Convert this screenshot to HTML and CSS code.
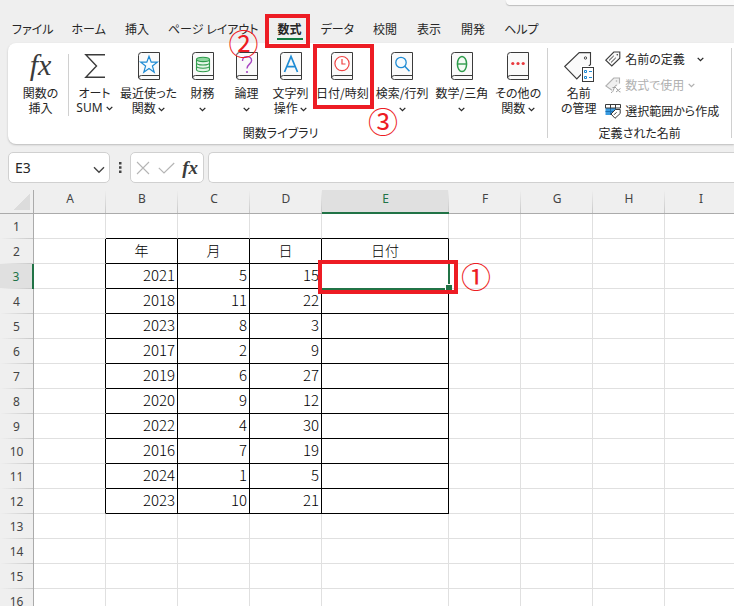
FILE: index.html
```html
<!DOCTYPE html>
<html lang="ja">
<head>
    <meta charset="UTF-8">
    <meta name="viewport" content="width=device-width, initial-scale=1.0">
    <title>Excel</title>
    <link rel="stylesheet" href="styles.css">
</head>
<body>

    <!-- shared icon shapes -->
    <svg class="defs" aria-hidden="true">
        <symbol id="book" viewBox="0 0 22 28">
            <path d="M21.5 .5H3.5Q.5 .5 .5 3.5V25Q.5 27.5 3.5 27.5H21.5Z" fill="#fafafa" stroke="#3b3b3b"/>
            <path d="M21.5 23.5H3.5Q.5 23.5 .5 26" fill="none" stroke="#3b3b3b"/>
        </symbol>
        <symbol id="caret" viewBox="0 0 7 5">
            <path d="M.7 .9L3.5 3.7L6.3 .9" fill="none" stroke="currentColor" stroke-width="1.3"/>
        </symbol>
    </svg>

    <header class="titlebar">
        <div class="search"></div>
    </header>

    <nav class="tabs">
        <button class="tab">ファイル</button>
        <button class="tab">ホーム</button>
        <button class="tab">挿入</button>
        <button class="tab">ページ レイアウト</button>
        <button class="tab active">数式<span class="mark mark-tab"></span><span class="num num-tab">②</span></button>
        <button class="tab">データ</button>
        <button class="tab">校閲</button>
        <button class="tab">表示</button>
        <button class="tab">開発</button>
        <button class="tab">ヘルプ</button>
    </nav>

    <section class="ribbon">
        <div class="group library">
            <div class="tools">
                <button class="tool insert-fn">
                    <span class="fx-big">fx</span>
                    <span>関数の</span>
                    <span>挿入</span>
                </button>
                <span class="divider"></span>
                <button class="tool">
                    <svg class="icon" viewBox="0 0 22 28"><path d="M21 2.7H1.8L12.5 14L1.8 25.3H21" fill="none" stroke="#3b3b3b" stroke-width="1.4"/></svg>
                    <span>オート</span>
                    <span class="latin">SUM <svg class="caret"><use href="#caret"/></svg></span>
                </button>
                <button class="tool">
                    <svg class="icon" viewBox="0 0 22 28"><use href="#book"/><path d="M11 4.2L13.2 10.2H19.3L14.4 14L16.2 20.2L11 16.5L5.8 20.2L7.6 14L2.7 10.2H8.8Z" fill="#f5fbff" stroke="#1e8bd4" stroke-width="1.2"/></svg>
                    <span>最近使った</span>
                    <span>関数 <svg class="caret"><use href="#caret"/></svg></span>
                </button>
                <button class="tool">
                    <svg class="icon" viewBox="0 0 22 28"><use href="#book"/><g fill="#e3f5e6" stroke="#2e9b4b" stroke-width="1.1"><path d="M4.5 7.5V17.5C4.5 20.4 17.5 20.4 17.5 17.5V7.5"/><path d="M4.5 14C4.5 17 17.5 17 17.5 14M4.5 10.8C4.5 13.8 17.5 13.8 17.5 10.8"/><ellipse cx="11" cy="7.4" rx="6.5" ry="2.2" fill="#8fd6a0"/></g></svg>
                    <span>財務</span>
                    <span><svg class="caret"><use href="#caret"/></svg></span>
                </button>
                <button class="tool">
                    <svg class="icon" viewBox="0 0 22 28"><use href="#book"/><path d="M6.5 9C6.5 3.2 15.6 3.2 15.6 8.6C15.6 12 11 12.4 11 16.5" fill="none" stroke="#a846c2" stroke-width="1.4"/><circle cx="11" cy="20" r="1.1" fill="#a846c2"/></svg>
                    <span>論理</span>
                    <span><svg class="caret"><use href="#caret"/></svg></span>
                </button>
                <button class="tool">
                    <svg class="icon" viewBox="0 0 22 28"><use href="#book"/><path d="M4.5 20L11 4.5L17.5 20M6.6 14.6H15.4" fill="none" stroke="#1e8bd4" stroke-width="1.7"/></svg>
                    <span>文字列</span>
                    <span>操作 <svg class="caret"><use href="#caret"/></svg></span>
                </button>
                <button class="tool">
                    <svg class="icon" viewBox="0 0 22 28"><use href="#book"/><circle cx="11" cy="11.6" r="7.1" fill="#fff" stroke="#f04343" stroke-width="1.2"/><path d="M11 7V12H14.5" fill="none" stroke="#f04343" stroke-width="1.2"/></svg>
                    <span>日付/時刻</span>
                    <span class="mark mark-tool"></span><span class="num num-tool">③</span>
                </button>
                <button class="tool">
                    <svg class="icon" viewBox="0 0 22 28"><use href="#book"/><circle cx="10" cy="10.5" r="5.2" fill="#f5fbff" stroke="#1e8bd4" stroke-width="1.3"/><path d="M13.8 14.3L18.5 19.3" stroke="#1e8bd4" stroke-width="1.5"/></svg>
                    <span>検索/行列</span>
                    <span><svg class="caret"><use href="#caret"/></svg></span>
                </button>
                <button class="tool">
                    <svg class="icon" viewBox="0 0 22 28"><use href="#book"/><ellipse cx="11" cy="12" rx="4.6" ry="7.5" fill="#f3fbf4" stroke="#2e9b4b" stroke-width="1.5"/><path d="M6.5 12H15.5" stroke="#2e9b4b" stroke-width="1.4"/></svg>
                    <span>数学/三角</span>
                    <span><svg class="caret"><use href="#caret"/></svg></span>
                </button>
                <button class="tool">
                    <svg class="icon" viewBox="0 0 22 28"><use href="#book"/><g fill="#e8383d"><circle cx="5.8" cy="11.5" r="1.6"/><circle cx="11" cy="11.5" r="1.6"/><circle cx="16.2" cy="11.5" r="1.6"/></g></svg>
                    <span>その他の</span>
                    <span>関数 <svg class="caret"><use href="#caret"/></svg></span>
                </button>
            </div>
            <p class="group-name">関数ライブラリ</p>
        </div>

        <div class="group names">
            <div class="tools">
                <button class="tool">
                    <svg class="icon-wide" viewBox="0 0 30 30"><path d="M.7 14.5L15.2 .6H26.5V12.5L12.8 27Z" fill="#fafafa" stroke="#3b3b3b" stroke-width="1.1"/><circle cx="21.5" cy="6" r="1.2" fill="none" stroke="#3b3b3b" stroke-width=".9"/><rect x="17" y="14" width="13" height="16" fill="#fff"/><rect x="18.5" y="15.5" width="11" height="14" fill="#fff" stroke="#3b3b3b"/><g fill="none" stroke="#1e8bd4"><path d="M20.5 18.5h2v2h-2zM20.5 24.5h2v2h-2zM25 19.5h3M25 25.5h3"/></g></svg>
                    <span>名前</span>
                    <span>の管理</span>
                </button>
                <div class="stack">
                    <button class="item">
                        <svg class="icon-small" viewBox="0 0 16 16"><path d="M.8 9.2L8.8 1H14.8V7.2L6.8 15Z" fill="#fafafa" stroke="#3b3b3b" stroke-width="1.1"/><path d="M4 9.5L8.8 4.8M6 11.5L10.8 6.8" stroke="#3b3b3b"/><circle cx="12.3" cy="3.8" r=".8" fill="#3b3b3b"/></svg>
                        <span>名前の定義</span>
                        <svg class="caret far"><use href="#caret"/></svg>
                    </button>
                    <button class="item" disabled>
                        <svg class="icon-small" viewBox="0 0 16 16"><path d="M7 13.2L.8 9L8.8 1H14.5V6.5" fill="#f0f0f0" stroke="#b0b0b0" stroke-width="1.1"/><circle cx="11.5" cy="4" r=".8" fill="#b0b0b0"/><path d="M6 15.5C9 16 8.8 7.5 11.8 8.2M7.5 10.5H11M11 11.5C13 11.5 13 15 15.5 15M15.5 11.5L11 15" fill="none" stroke="#a0a0a0"/></svg>
                        <span>数式で使用</span>
                        <svg class="caret"><use href="#caret"/></svg>
                    </button>
                    <button class="item">
                        <svg class="icon-small" viewBox="0 0 16 16"><path d="M.5 1.5H15.5V11.5H.5Z" fill="#fff"/><path d="M.5 5H11V12H.5Z" fill="#3a9be0"/><path d="M5.5 5V12M10.5 5V7M.5 8.5H9" stroke="#1c6fb0"/><path d="M.5 5V1.5H15.5V5ZM5.5 1.5V5M10.5 1.5V5" fill="none" stroke="#3b3b3b"/><path d="M6 11L10.5 6.5H15.2V10.5L10 15.3Z" fill="#fff" stroke="#3b3b3b"/><path d="M9 11.8L11.5 9.3" stroke="#3b3b3b"/></svg>
                        <span>選択範囲から作成</span>
                    </button>
                </div>
            </div>
            <p class="group-name">定義された名前</p>
        </div>
    </section>

    <div class="formula-bar">
        <div class="name-box">
            <input type="text" value="E3" aria-label="名前ボックス">
            <button class="name-open" aria-label="名前の一覧"><svg viewBox="0 0 12 8"><path d="M1 1.2L6 6.2L11 1.2" fill="none" stroke="#444" stroke-width="1.4"/></svg></button>
        </div>
        <svg class="dots" viewBox="0 0 3 11"><path d="M0 0h2.5v2.5h-2.5zM0 4.2h2.5v2.5h-2.5zM0 8.4h2.5v2.5h-2.5z" fill="#444"/></svg>
        <div class="entry">
            <button aria-label="キャンセル"><svg width="14" height="14" viewBox="0 0 14 14"><path d="M1 1L13 13M13 1L1 13" stroke="#b5b5b5" stroke-width="1.1"/></svg></button>
            <button aria-label="入力"><svg width="17" height="12" viewBox="0 0 17 12"><path d="M.8 5.8L6 11L16.2 1" fill="none" stroke="#b5b5b5" stroke-width="1.2"/></svg></button>
            <button class="fx-small">fx</button>
        </div>
        <input class="formula" type="text" aria-label="数式バー">
    </div>

    <main class="sheet">
        <table>
            <colgroup>
                <col class="c-head"><col><col><col><col><col class="c-wide"><col><col><col><col>
            </colgroup>
            <thead>
                <tr><th class="corner"></th><th>A</th><th>B</th><th>C</th><th>D</th><th class="selected">E</th><th>F</th><th>G</th><th>H</th><th>I</th></tr>
            </thead>
            <tbody>
                <tr class="before"><th>1</th><td></td><td></td><td></td><td></td><td></td><td></td><td></td><td></td><td></td></tr>
                <tr class="data title"><th>2</th><td></td><td>年</td><td>月</td><td>日</td><td>日付</td><td></td><td></td><td></td><td></td></tr>
                <tr class="data"><th class="selected">3</th><td></td><td>2021</td><td>5</td><td>15</td><td class="current"><span class="mark mark-cell"></span><span class="num num-cell">①</span></td><td></td><td></td><td></td><td></td></tr>
                <tr class="data"><th>4</th><td></td><td>2018</td><td>11</td><td>22</td><td></td><td></td><td></td><td></td><td></td></tr>
                <tr class="data"><th>5</th><td></td><td>2023</td><td>8</td><td>3</td><td></td><td></td><td></td><td></td><td></td></tr>
                <tr class="data"><th>6</th><td></td><td>2017</td><td>2</td><td>9</td><td></td><td></td><td></td><td></td><td></td></tr>
                <tr class="data"><th>7</th><td></td><td>2019</td><td>6</td><td>27</td><td></td><td></td><td></td><td></td><td></td></tr>
                <tr class="data"><th>8</th><td></td><td>2020</td><td>9</td><td>12</td><td></td><td></td><td></td><td></td><td></td></tr>
                <tr class="data"><th>9</th><td></td><td>2022</td><td>4</td><td>30</td><td></td><td></td><td></td><td></td><td></td></tr>
                <tr class="data"><th>10</th><td></td><td>2016</td><td>7</td><td>19</td><td></td><td></td><td></td><td></td><td></td></tr>
                <tr class="data"><th>11</th><td></td><td>2024</td><td>1</td><td>5</td><td></td><td></td><td></td><td></td><td></td></tr>
                <tr class="data"><th>12</th><td></td><td>2023</td><td>10</td><td>21</td><td></td><td></td><td></td><td></td><td></td></tr>
                <tr><th>13</th><td></td><td></td><td></td><td></td><td></td><td></td><td></td><td></td><td></td></tr>
                <tr><th>14</th><td></td><td></td><td></td><td></td><td></td><td></td><td></td><td></td><td></td></tr>
                <tr><th>15</th><td></td><td></td><td></td><td></td><td></td><td></td><td></td><td></td><td></td></tr>
                <tr><th>16</th><td></td><td></td><td></td><td></td><td></td><td></td><td></td><td></td><td></td></tr>
            </tbody>
        </table>
    </main>

</body>
</html>
```

FILE: styles.css
```css
* {
    margin: 0;
    padding: 0;
    box-sizing: border-box;
}

body {
    display: flex;
    flex-direction: column;
    height: 100vh;
    overflow: hidden;
    background: #efefef;
    color: #262626;
    font-family: "Noto Sans CJK JP", sans-serif;
    font-size: 12px;
    font-feature-settings: "palt";
}

button,
input {
    border: none;
    background: none;
    color: inherit;
    font: inherit;
    font-feature-settings: inherit;
}

.defs {
    position: absolute;
    width: 0;
    height: 0;
}

/* title bar */
.titlebar {
    display: flex;
    justify-content: flex-end;
    height: 18px;
}

.search {
    width: 31%;
    height: 5px;
    background: #fafafa;
    border-bottom-left-radius: 4px;
    box-shadow: 0 1px 1px #bdbdbd;
}

/* tabs */
.tabs {
    display: flex;
    gap: 18px;
    height: 25px;
    padding-left: 12px;
}

.tab {
    position: relative;
    min-width: 26px;
    height: 22px;
    padding-top: 2px;
    border-bottom: 2px solid transparent;
    line-height: 18px;
    white-space: nowrap;
}

.tab.active {
    border-bottom-color: #107c41;
    font-weight: bold;
}

/* ribbon */
.ribbon {
    display: flex;
    margin-left: 8px;
    padding: 5px 0 6px 6px;
    background: #fff;
    border-radius: 8px 0 0 8px;
    box-shadow: 0 1px 2px #bbb;
}

.group {
    display: flex;
    flex-direction: column;
    justify-content: space-between;
    height: 90px;
    border-right: 1px solid #d0d0d0;
}

.tools {
    display: flex;
    gap: 7px;
    padding-top: 4px;
}

.library .tools {
    padding-right: 6px;
}

.tool {
    position: relative;
    display: flex;
    flex-direction: column;
    align-items: center;
    min-width: 37px;
    line-height: 15px;
    white-space: nowrap;
}

.tool > span:not(.mark):not(.num) {
    min-height: 15px;
}

.icon,
.icon-wide {
    width: 22px;
    height: 28px;
    margin-bottom: 5px;
}

.icon-wide {
    width: 30px;
    height: 30px;
    margin-bottom: 3px;
}

.tool .fx-big {
    height: 28px;
    margin-bottom: 5px;
    color: #3b3b3b;
    font-family: "Liberation Serif", serif;
    font-size: 30px;
    font-style: italic;
    line-height: 26px;
}

.insert-fn {
    min-width: 53px;
}

.latin {
    font-family: "Noto Sans", sans-serif;
}

.divider {
    width: 1px;
    height: 62px;
    margin: 2px 0 0 -6px;
    background: #d0d0d0;
}

.caret {
    width: 7px;
    height: 5px;
    vertical-align: 1px;
}

.group-name {
    text-align: center;
    line-height: 10px;
}

.names {
    padding: 0 12px;
}

.names .tools {
    gap: 8px;
}

.stack {
    display: flex;
    flex-direction: column;
    gap: 8px;
    margin-top: -2px;
}

.item {
    display: flex;
    align-items: center;
    gap: 4px;
    height: 18px;
    line-height: 18px;
    white-space: nowrap;
}

.item:disabled {
    color: #b0b0b0;
}

.icon-small {
    width: 16px;
    height: 16px;
}

.far {
    margin-left: 8px;
}

/* formula bar */
.formula-bar {
    display: flex;
    align-items: center;
    height: 31px;
    margin: 8px 0 7px 8px;
}

.name-box,
.entry,
.formula {
    height: 31px;
    background: #fff;
    border: 1px solid #d0d0d0;
    border-radius: 5px;
}

.name-box {
    display: flex;
    align-items: center;
    width: 102px;
    padding: 0 4px 0 6px;
}

.name-box input {
    flex: 1;
    min-width: 0;
    font-family: "Noto Sans", sans-serif;
    font-size: 14px;
}

.name-open {
    width: 12px;
    height: 16px;
}

.name-open svg {
    width: 12px;
    height: 8px;
}

.dots {
    width: 3px;
    height: 11px;
    margin: 0 8px 0 9px;
}

.entry {
    display: flex;
    align-items: center;
    justify-content: space-between;
    width: 74px;
    margin-right: 4px;
    padding: 0 5px;
}

.entry svg {
    display: block;
}

.fx-small {
    color: #3b3b3b;
    font-family: "Liberation Serif", serif;
    font-size: 19px;
    font-style: italic;
    font-weight: bold;
    line-height: 20px;
}

.formula {
    flex: 1;
    border-right: none;
    border-radius: 5px 0 0 5px;
    padding: 0 8px;
}

/* sheet */
.sheet {
    flex: 1;
    min-height: 0;
    overflow: hidden;
}

table {
    width: max-content;
    table-layout: fixed;
    border-collapse: separate;
    border-spacing: 0;
}

col {
    width: 72px;
}

.c-head {
    width: 34px;
}

.c-wide {
    width: 127px;
}

th {
    background: #efefef;
    color: #444;
    font-family: "Noto Sans", sans-serif;
    font-size: 12px;
    font-weight: normal;
}

thead th {
    height: 24px;
    padding-bottom: 6px;
    border-bottom: 1px solid #ababab;
    background: linear-gradient(#efefef, #c8c8c8) right / 1px 100% no-repeat #efefef;
    line-height: 16px;
}

thead .selected {
    padding-bottom: 5px;
    border-bottom: 2px solid #217346;
    background-color: #e0e0e0;
    color: #217346;
}

thead .corner {
    border-right: 1px solid #ababab;
    background: linear-gradient(135deg, transparent 50%, #dcdcdc 50%) 14px 4px / 16px 16px no-repeat #efefef;
}

tbody th {
    border-right: 1px solid #ababab;
    background: linear-gradient(to right, #efefef, #c8c8c8) bottom / 100% 1px no-repeat #efefef;
}

tbody .selected {
    border-right: 2px solid #217346;
    background-color: #e0e0e0;
    color: #217346;
}

td {
    position: relative;
    height: 25px;
    padding: 0 2px 2px 0;
    background: #fff;
    border-right: 1px solid #e0e0e0;
    border-bottom: 1px solid #e0e0e0;
    color: #000;
    font-size: 15px;
    font-weight: 300;
    line-height: 20px;
    text-align: right;
}

.title td {
    padding: 0 0 2px;
    font-size: 14px;
    text-align: center;
}

/* black frame around B2:E12 */
.before td:nth-child(n+3):nth-child(-n+6) {
    border-bottom-color: #000;
}

.data td:nth-child(2) {
    border-right-color: #000;
}

.data td:nth-child(n+3):nth-child(-n+6) {
    border-right-color: #000;
    border-bottom-color: #000;
}

.current {
    z-index: 1;
}

.current::before {
    content: "";
    position: absolute;
    inset: -2px;
    border: 2px solid #217346;
}

.current::after {
    content: "";
    position: absolute;
    right: -4px;
    bottom: -3px;
    width: 6px;
    height: 6px;
    background: #217346;
    border: solid #fff;
    border-width: 1px 0 0 1px;
}

/* red step marks */
.mark {
    position: absolute;
    z-index: 2;
    border: 4px solid #ed1c24;
}

.num {
    position: absolute;
    z-index: 3;
    color: #ed1c24;
    font-size: 30px;
    font-weight: 400;
    line-height: 30px;
}

.mark-tab {
    inset: -4px -7px -10px -12px;
}

.num-tab {
    top: 9px;
    right: 44px;
}

.mark-tool {
    inset: -8px -5px auto -3px;
    height: 65px;
}

.num-tool {
    top: 53px;
    left: 52px;
}

.mark-cell {
    inset: -4px -10px -6px -4px;
}

.num-cell {
    top: -4px;
    left: 139px;
}
```
